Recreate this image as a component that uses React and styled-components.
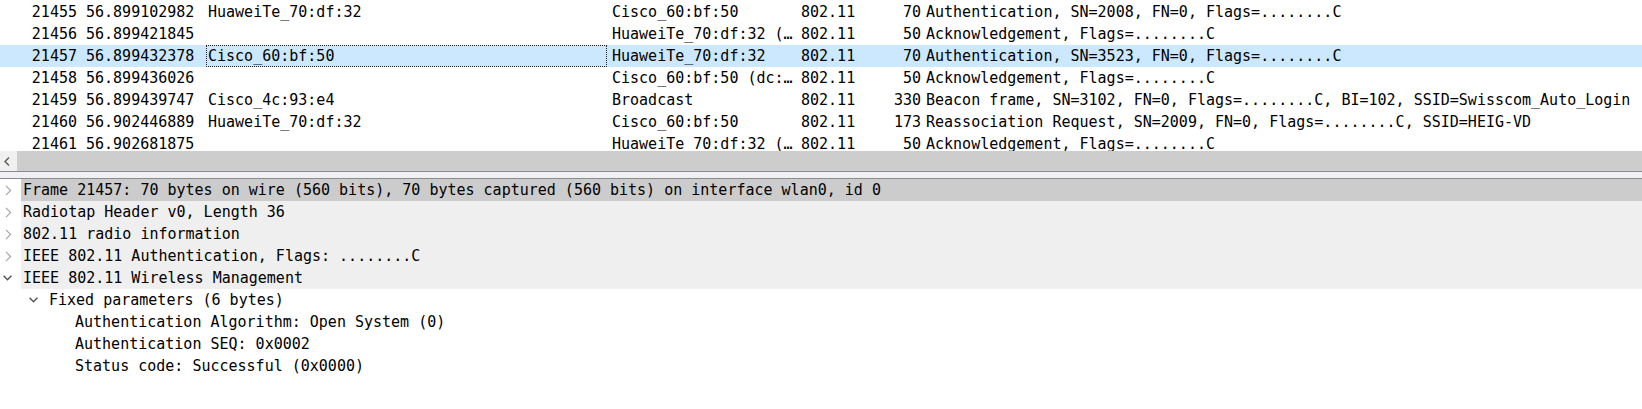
import React from 'react';
import styled, { createGlobalStyle } from 'styled-components';

const Global = createGlobalStyle`
  html, body { margin: 0; padding: 0; background: #ffffff; }
  body {
    font-family: "DejaVu Sans Mono", "Liberation Mono", monospace;
    font-size: 15px;
    color: #000000;
    overflow: hidden;
  }
`;

const Page = styled.div`
  width: 1642px;
  height: 409px;
  display: flex;
  flex-direction: column;
  background: #ffffff;
  overflow: hidden;
`;

const PacketList = styled.div`
  height: 151px;
  padding-top: 1px;
  box-sizing: border-box;
  overflow: hidden;
  flex: none;
`;

const Row = styled.div`
  display: grid;
  grid-template-columns: 77px 129px 401px 189px 74px 51px 1fr;
  height: 22px;
  line-height: 22px;
  white-space: nowrap;
  background: ${(p) => (p.$selected ? '#cce8ff' : 'transparent')};
`;

const Cell = styled.div`
  overflow: hidden;
  min-width: 0;
  box-sizing: border-box;
  padding-left: ${(p) => p.$pl || 0}px;
  text-align: ${(p) => (p.$right ? 'right' : 'left')};
  outline: ${(p) => (p.$focus ? '1px dotted #222' : 'none')};
  outline-offset: -1px;
`;

const HScroll = styled.div`
  height: 20px;
  flex: none;
  display: flex;
  background: #f0f0f0;
`;

const ScrollButton = styled.div`
  width: 17px;
  display: flex;
  align-items: center;
  justify-content: center;
  padding-right: 4px;
  box-sizing: border-box;
`;

const ScrollThumb = styled.div`
  flex: 1;
  background: #cdcdcd;
`;

const Splitter = styled.div`
  height: 6px;
  flex: none;
  background: #f0f0f0;
  border-top: 1px solid #878b92;
  border-bottom: 1px solid #878b92;
`;

const Details = styled.div`
  flex: 1;
  background: #ffffff;
`;

const TreeRow = styled.div`
  display: flex;
  height: 22px;
  line-height: 22px;
  white-space: nowrap;
  padding-left: ${(p) => p.$level * 26}px;
`;

const Toggle = styled.div`
  width: 21px;
  flex: none;
  display: flex;
  align-items: center;
  padding-left: ${(p) => (p.$open ? 3 : 5)}px;
  box-sizing: border-box;
`;

const Label = styled.div`
  flex: 1;
  padding-left: 2px;
  background: ${(p) => (p.$selected ? '#cccccc' : p.$top ? '#efefef' : 'transparent')};
`;

const ChevronLeft = () => (
  <svg width="6" height="9" viewBox="0 0 6 9">
    <polyline points="5,0.5 1,4.5 5,8.5" fill="none" stroke="#5a5a5a" strokeWidth="1.4" />
  </svg>
);

const ChevronRight = () => (
  <svg width="7" height="11" viewBox="0 0 7 11">
    <polyline points="1,0.8 5.6,5.5 1,10.2" fill="none" stroke="#a6a6a6" strokeWidth="1.2" />
  </svg>
);

const ChevronDown = () => (
  <svg width="9" height="6" viewBox="0 0 9 6">
    <polyline points="0.6,0.8 4.5,4.8 8.4,0.8" fill="none" stroke="#4f4f4f" strokeWidth="1.3" />
  </svg>
);

const packets = [
  ['21455', '56.899102982', 'HuaweiTe_70:df:32', 'Cisco_60:bf:50', '802.11', '70', 'Authentication, SN=2008, FN=0, Flags=........C'],
  ['21456', '56.899421845', '', 'HuaweiTe_70:df:32 (\u2026', '802.11', '50', 'Acknowledgement, Flags=........C'],
  ['21457', '56.899432378', 'Cisco_60:bf:50', 'HuaweiTe_70:df:32', '802.11', '70', 'Authentication, SN=3523, FN=0, Flags=........C'],
  ['21458', '56.899436026', '', 'Cisco_60:bf:50 (dc:\u2026', '802.11', '50', 'Acknowledgement, Flags=........C'],
  ['21459', '56.899439747', 'Cisco_4c:93:e4', 'Broadcast', '802.11', '330', 'Beacon frame, SN=3102, FN=0, Flags=........C, BI=102, SSID=Swisscom_Auto_Login'],
  ['21460', '56.902446889', 'HuaweiTe_70:df:32', 'Cisco_60:bf:50', '802.11', '173', 'Reassociation Request, SN=2009, FN=0, Flags=........C, SSID=HEIG-VD'],
  ['21461', '56.902681875', '', 'HuaweiTe_70:df:32 (\u2026', '802.11', '50', 'Acknowledgement, Flags=........C'],
];

const tree = [
  { level: 0, toggle: 'closed', top: true, selected: true, text: 'Frame 21457: 70 bytes on wire (560 bits), 70 bytes captured (560 bits) on interface wlan0, id 0' },
  { level: 0, toggle: 'closed', top: true, text: 'Radiotap Header v0, Length 36' },
  { level: 0, toggle: 'closed', top: true, text: '802.11 radio information' },
  { level: 0, toggle: 'closed', top: true, text: 'IEEE 802.11 Authentication, Flags: ........C' },
  { level: 0, toggle: 'open', top: true, text: 'IEEE 802.11 Wireless Management' },
  { level: 1, toggle: 'open', text: 'Fixed parameters (6 bytes)' },
  { level: 2, text: 'Authentication Algorithm: Open System (0)' },
  { level: 2, text: 'Authentication SEQ: 0x0002' },
  { level: 2, text: 'Status code: Successful (0x0000)' },
];

export default function App() {
  return (
    <Page>
      <Global />
      <PacketList>
        {packets.map((p, i) => {
          const selected = p[0] === '21457';
          return (
            <Row key={i} $selected={selected}>
              <Cell $right>{p[0]}</Cell>
              <Cell $pl={9}>{p[1]}</Cell>
              <Cell $pl={2} $focus={selected}>{p[2]}</Cell>
              <Cell $pl={5}>{p[3]}</Cell>
              <Cell $pl={5}>{p[4]}</Cell>
              <Cell $right>{p[5]}</Cell>
              <Cell $pl={5}>{p[6]}</Cell>
            </Row>
          );
        })}
      </PacketList>
      <HScroll>
        <ScrollButton>
          <ChevronLeft />
        </ScrollButton>
        <ScrollThumb />
      </HScroll>
      <Splitter />
      <Details>
        {tree.map((n, i) => (
          <TreeRow key={i} $level={n.level}>
            <Toggle $open={n.toggle === 'open'}>
              {n.toggle === 'closed' && <ChevronRight />}
              {n.toggle === 'open' && <ChevronDown />}
            </Toggle>
            <Label $top={n.top} $selected={n.selected}>{n.text}</Label>
          </TreeRow>
        ))}
      </Details>
    </Page>
  );
}
